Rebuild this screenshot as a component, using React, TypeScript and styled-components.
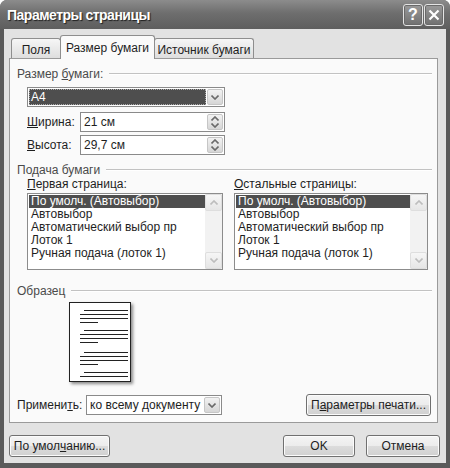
import styled, { createGlobalStyle } from "styled-components";

const GlobalStyle = createGlobalStyle`
  html, body { margin: 0; padding: 0; background: #fff; }
  body { font-family: "Liberation Sans", Arial, sans-serif; font-size: 11px; color: #1e1e1e; }
  * { box-sizing: border-box; }
`;

const Window = styled.div`
  width: 450px;
  height: 468px;
  display: flex;
  flex-direction: column;
  background: #5a5a5a;
  border-radius: 7px 7px 0 0;
  overflow: hidden;
`;

const TitleBar = styled.div`
  height: 29px;
  flex: none;
  display: flex;
  align-items: center;
  padding: 0 6px 0 7px;
  background: linear-gradient(#8c8c8c, #6e6e6e 45%, #5e5e5e);
`;

const Title = styled.div`
  flex: 1;
  color: #fff;
  font-weight: bold;
  font-size: 14px;
  letter-spacing: -0.5px;
  text-shadow: 1px 1px 1px #1e1e1e;
`;

const CaptionButton = styled.div`
  width: 20px;
  height: 22px;
  margin-left: 1px;
  border: 1px solid #e4e4e4;
  border-radius: 3px;
  display: flex;
  align-items: center;
  justify-content: center;
  background: linear-gradient(#9a9a9a, #707070);
  color: #fff;
  font-weight: bold;
  font-size: 16px;
  box-shadow: inset 0 0 0 1px #6a6a6a;
`;

const Body = styled.div`
  flex: 1;
  margin: 0 4px 5px;
  background: #e2e2e2;
  padding: 6px 8px 0 5px;
  display: flex;
  flex-direction: column;
`;

const TabStrip = styled.div`
  display: flex;
  align-items: flex-end;
  height: 23px;
  padding-left: 2px;
  position: relative;
  z-index: 1;
`;

const Tab = styled.div<{ $active?: boolean; $w: number }>`
  width: ${({ $w }) => $w}px;
  height: ${({ $active }) => ($active ? 24 : 20)}px;
  margin-bottom: ${({ $active }) => ($active ? -1 : 0)}px;
  border: 1px solid #8e8e8e;
  border-bottom: none;
  border-radius: 3px 3px 0 0;
  background: ${({ $active }) =>
    $active ? "#fafafa" : "linear-gradient(#f6f6f6, #dedede)"};
  display: flex;
  align-items: center;
  justify-content: center;
  font-size: 12px;
  padding-top: ${({ $active }) => ($active ? 0 : 2)}px;
  & + & { margin-left: -1px; }
`;

const Panel = styled.div`
  height: 365px;
  border: 1px solid #9a9a9a;
  background: #fafafa;
  padding: 8px 5px 0 7px;
  display: flex;
  flex-direction: column;
`;

const GroupHeader = styled.div<{ $mt: number }>`
  display: flex;
  align-items: center;
  gap: 6px;
  height: 14px;
  margin-top: ${({ $mt }) => $mt}px;
  color: #4a4a4a;
  font-size: 12px;
  &::after {
    content: "";
    flex: 1;
    border-top: 1px solid #c2c2c2;
    border-bottom: 1px solid #fff;
  }
`;

const Indent = styled.div<{ $mt?: number }>`
  margin-left: 10px;
  margin-top: ${({ $mt }) => $mt ?? 0}px;
`;

const Combo = styled.div<{ $w: number }>`
  width: ${({ $w }) => $w}px;
  height: 20px;
  border: 1px solid #8a8a8a;
  background: #fff;
  display: flex;
  align-items: center;
  padding: 1px;
  font-size: 12px;
`;

const ComboText = styled.div<{ $selected?: boolean }>`
  flex: 1;
  height: 100%;
  display: flex;
  align-items: center;
  padding-left: 2px;
  margin-right: 1px;
  background: ${({ $selected }) => ($selected ? "#4e4e4e" : "transparent")};
  color: ${({ $selected }) => ($selected ? "#fff" : "#1e1e1e")};
  outline: ${({ $selected }) => ($selected ? "1px dotted #aaa" : "none")};
  outline-offset: -1px;
`;

const ArrowBox = styled.div`
  width: 16px;
  height: 16px;
  flex: none;
  border: 1px solid #c6c6c6;
  border-radius: 2px;
  background: linear-gradient(#f2f2f2, #d6d6d6);
  display: flex;
  flex-direction: column;
  align-items: center;
  justify-content: center;
`;

const FieldRow = styled.div<{ $mt: number }>`
  display: flex;
  align-items: center;
  margin-top: ${({ $mt }) => $mt}px;
  font-size: 12px;
`;

const FieldLabel = styled.div<{ $w: number }>`
  width: ${({ $w }) => $w}px;
`;

const Columns = styled.div`
  display: grid;
  grid-template-columns: 196px 194px;
  column-gap: 11px;
  margin-left: 10px;
`;

const ColLabel = styled.div`
  height: 14px;
  font-size: 12px;
  margin-bottom: 2px;
`;

const ListBox = styled.div`
  height: 77px;
  border: 1px solid #8c8c8c;
  background: #fff;
  display: flex;
`;

const ListItems = styled.div`
  flex: 1;
  padding: 1px 0 0 1px;
  min-width: 0;
`;

const ListItem = styled.div<{ $selected?: boolean }>`
  height: 13px;
  line-height: 13px;
  padding-left: 2px;
  white-space: nowrap;
  overflow: hidden;
  font-size: 12px;
  background: ${({ $selected }) => ($selected ? "#4e4e4e" : "transparent")};
  color: ${({ $selected }) => ($selected ? "#fff" : "#1e1e1e")};
`;

const ScrollBar = styled.div`
  width: 17px;
  flex: none;
  background: #f2f2f2;
  display: flex;
  flex-direction: column;
  justify-content: space-between;
`;

const ScrollButton = styled.div`
  height: 17px;
  border: 1px solid #dedede;
  border-radius: 2px;
  background: linear-gradient(#f6f6f6, #e6e6e6);
  display: flex;
  align-items: center;
  justify-content: center;
`;

const Preview = styled.div`
  width: 62px;
  height: 80px;
  margin: 4px 0 0 52px;
  background: #fff;
  border: 1px solid #222;
  box-shadow: 2px 2px 3px rgba(0, 0, 0, 0.45);
`;

const ApplyRow = styled.div`
  display: flex;
  align-items: center;
  margin-top: 12px;
  padding-right: 1px;
  font-size: 12px;
`;

const Button = styled.div<{ $w: number; $ml?: number }>`
  width: ${({ $w }) => $w}px;
  margin-left: ${({ $ml }) => $ml ?? 0}px;
  height: 22px;
  border: 1px solid #707070;
  border-radius: 3px;
  background: linear-gradient(#f4f4f4 0%, #ececec 50%, #dcdcdc 51%, #d0d0d0 100%);
  box-shadow: inset 0 0 0 1px #fbfbfb;
  display: flex;
  align-items: center;
  justify-content: center;
  font-size: 12px;
`;

const Spacer = styled.div`
  flex: 1;
`;

const BottomRow = styled.div`
  display: flex;
  align-items: center;
  margin: 12px -2px 0 0;
`;

const Chevron = ({ dir, color = "#6a6a6a" }: { dir: "up" | "down"; color?: string }) => (
  <svg width="8" height="5" viewBox="0 0 8 5">
    <path
      d={dir === "down" ? "M0.5 0.5 L4 4 L7.5 0.5" : "M0.5 4.5 L4 1 L7.5 4.5"}
      fill="none"
      stroke={color}
      strokeWidth="1.6"
    />
  </svg>
);

const Spin = () => (
  <ArrowBox>
    <Chevron dir="up" />
    <div style={{ height: 2 }} />
    <Chevron dir="down" />
  </ArrowBox>
);

const items = [
  "По умолч. (Автовыбор)",
  "Автовыбор",
  "Автоматический выбор пр",
  "Лоток 1",
  "Ручная подача (лоток 1)",
];

const List = () => (
  <ListBox>
    <ListItems>
      {items.map((t, i) => (
        <ListItem key={t} $selected={i === 0}>
          {t}
        </ListItem>
      ))}
    </ListItems>
    <ScrollBar>
      <ScrollButton>
        <Chevron dir="up" color="#bdbdbd" />
      </ScrollButton>
      <ScrollButton>
        <Chevron dir="down" color="#bdbdbd" />
      </ScrollButton>
    </ScrollBar>
  </ListBox>
);

// y, x1, x2 of the text lines drawn on the sample page
const pageLines: [number, number, number][] = [
  [7, 14, 58], [11, 10, 58], [15, 10, 58], [19, 10, 28],
  [27, 14, 58], [31, 10, 58], [35, 10, 58], [39, 10, 28],
  [49, 14, 58], [53, 10, 58], [57, 10, 58], [61, 10, 28],
  [69, 14, 58], [73, 10, 58],
];

const PageDrawing = () => (
  <svg width="60" height="78" viewBox="0 0 60 78">
    {pageLines.map(([y, x1, x2]) => (
      <line key={y} x1={x1} x2={x2} y1={y + 0.5} y2={y + 0.5} stroke="#222" strokeWidth="1" />
    ))}
  </svg>
);

const App = () => (
  <>
    <GlobalStyle />
    <Window>
      <TitleBar>
        <Title>Параметры страницы</Title>
        <CaptionButton>?</CaptionButton>
        <CaptionButton>
          <svg width="12" height="12" viewBox="0 0 12 12">
            <path d="M1.5 1.5 L10.5 10.5 M10.5 1.5 L1.5 10.5" stroke="#fff" strokeWidth="2.2" />
          </svg>
        </CaptionButton>
      </TitleBar>
      <Body>
        <TabStrip>
          <Tab $w={50}>Поля</Tab>
          <Tab $w={95} $active>Размер бумаги</Tab>
          <Tab $w={100}>Источник бумаги</Tab>
        </TabStrip>
        <Panel>
          <GroupHeader $mt={0}>
            <span>Размер <u>б</u>умаги:</span>
          </GroupHeader>
          <Indent $mt={6}>
            <Combo $w={198}>
              <ComboText $selected>A4</ComboText>
              <ArrowBox>
                <Chevron dir="down" />
              </ArrowBox>
            </Combo>
            <FieldRow $mt={5}>
              <FieldLabel $w={53}><u>Ш</u>ирина:</FieldLabel>
              <Combo $w={145}>
                <ComboText>21 см</ComboText>
                <Spin />
              </Combo>
            </FieldRow>
            <FieldRow $mt={3}>
              <FieldLabel $w={53}><u>В</u>ысота:</FieldLabel>
              <Combo $w={145}>
                <ComboText>29,7 см</ComboText>
                <Spin />
              </Combo>
            </FieldRow>
          </Indent>
          <GroupHeader $mt={8}>
            <span>Подача бумаги</span>
          </GroupHeader>
          <Columns>
            <div>
              <ColLabel><u>П</u>ервая страница:</ColLabel>
              <List />
            </div>
            <div>
              <ColLabel><u>О</u>стальные страницы:</ColLabel>
              <List />
            </div>
          </Columns>
          <GroupHeader $mt={14}>
            <span>Образец</span>
          </GroupHeader>
          <Preview>
            <PageDrawing />
          </Preview>
          <ApplyRow>
            <FieldLabel $w={69}>Примени<u>т</u>ь:</FieldLabel>
            <Combo $w={136}>
              <ComboText>ко всему документу</ComboText>
              <ArrowBox>
                <Chevron dir="down" />
              </ArrowBox>
            </Combo>
            <Spacer />
            <Button $w={125}>П<u>а</u>раметры печати...</Button>
          </ApplyRow>
        </Panel>
        <BottomRow>
          <Button $w={101}>По умол<u>ч</u>анию...</Button>
          <Spacer />
          <Button $w={72}>OK</Button>
          <Button $w={74} $ml={11}>Отмена</Button>
        </BottomRow>
      </Body>
    </Window>
  </>
);

export default App;
